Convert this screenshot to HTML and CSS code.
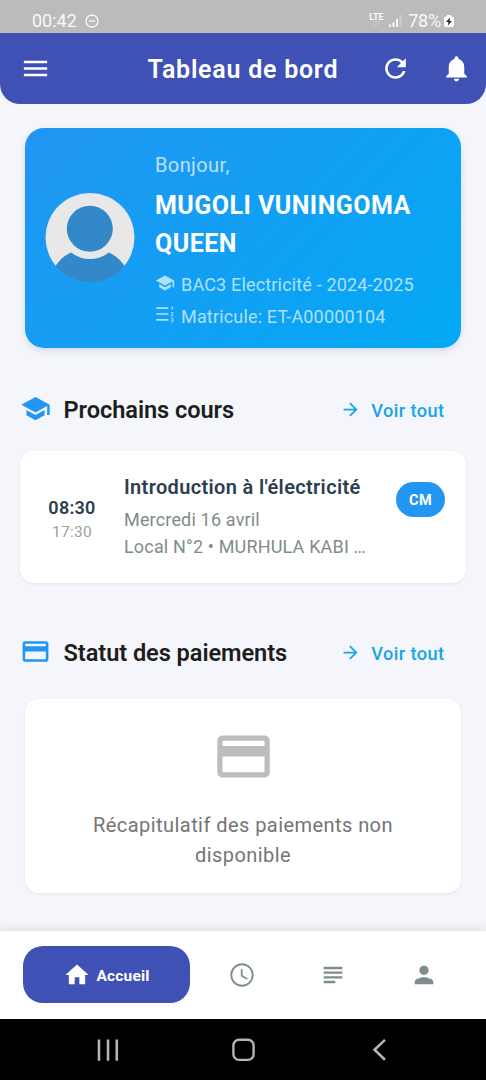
FILE: index.html
```html
<!DOCTYPE html>
<html lang="fr">
<head>
<meta charset="utf-8">
<title>Tableau de bord</title>
<link rel="stylesheet" href="styles.css">
</head>
<body>
<div class="phone">
  <div class="status">
    <span class="clock">00:42</span>
    <svg class="dnd" width="14" height="14" viewBox="0 0 14 14" fill="none" stroke="currentColor" stroke-width="1.3"><circle cx="7" cy="7" r="6"/><path d="M3.8 7h6.4"/></svg>
    <span class="lte"><b>LTE</b><i>LT</i></span>
    <svg class="signal" width="13" height="12" viewBox="0 0 13 12" fill="currentColor"><path d="M0 9.500h2V12H0zM3.500 7.500h2V12h-2zM7 4h2v8H7z"/><path opacity=".35" d="M10.500 0h2v12h-2z"/></svg>
    <span class="percent">78%</span>
    <svg class="battery" width="10" height="12" viewBox="0 0 10 12"><path fill="#fff" d="M3 0h4v1.500h1Q10 1.500 10 3.500V10Q10 12 8 12H2Q0 12 0 10V3.500Q0 1.500 2 1.500h1z"/><path fill="#222" d="M6.200 2.500 2 7h2.500L3.800 10.500 8 6H5.500z"/></svg>
  </div>

  <header class="appbar">
    <svg class="icon" viewBox="0 0 24 24"><path d="M3 18h18v-2H3v2zm0-5h18v-2H3v2zm0-7v2h18V6H3z"/></svg>
    <h1>Tableau de bord</h1>
    <svg class="icon refresh" viewBox="0 0 24 24"><path d="M17.650 6.350C16.200 4.900 14.210 4 12 4c-4.420 0-7.990 3.580-7.990 8s3.570 8 7.990 8c3.730 0 6.840-2.550 7.730-6h-2.080c-.82 2.330-3.040 4-5.650 4-3.310 0-6-2.690-6-6s2.690-6 6-6c1.660 0 3.140.69 4.220 1.780L13 11h7V4l-2.350 2.350z"/></svg>
    <svg class="icon" viewBox="0 0 24 24"><path d="M12 22c1.100 0 2-.9 2-2h-4c0 1.100.89 2 2 2zm6-6v-5c0-3.070-1.640-5.640-4.500-6.320V4c0-.83-.67-1.500-1.500-1.500s-1.500.67-1.500 1.500v.68C7.630 5.360 6 7.920 6 11v5l-2 2v1h16v-1l-2-2z"/></svg>
  </header>

  <main>
    <section class="profile">
      <svg class="avatar" width="90" height="90" viewBox="0 0 90 90">
        <circle cx="45" cy="44.500" r="44.500" fill="#e8e8e8"/>
        <circle cx="44.800" cy="35.700" r="23" fill="#3288c8"/>
        <path fill="#3288c8" d="M10.500 73Q17 63 26.500 59.500Q34 66 44.800 66Q56 66 63.500 59.500Q73 63 79.500 73A44.500 44.500 0 0 1 10.500 73z"/>
      </svg>
      <div class="who">
        <p class="hello">Bonjour,</p>
        <p class="name">MUGOLI VUNINGOMA QUEEN</p>
        <p class="detail"><svg viewBox="0 0 24 24"><path d="M5 13.180v4L12 21l7-3.820v-4L12 17l-7-3.820zM12 3 1 9l11 6 9-4.910V17h2V9L12 3z"/></svg><span>BAC3 Electricité - 2024-2025</span></p>
        <p class="detail"><svg viewBox="0 0 24 24"><path d="M1.500 4H16v2H1.500zm0 7H16v2H1.500zm0 7H16v2H1.500zM20 3h1.500v4H20zM19 10h3v1.500l-2 2.500h2v1h-3v-1.500l2-2.500h-2zM19 17h3v5h-3v-1h2v-1h-1v-1h1v-1h-2z"/></svg><span>Matricule: ET-A00000104</span></p>
      </div>
    </section>

    <div class="heading">
      <svg class="icon" viewBox="0 0 24 24"><path d="M5 13.180v4L12 21l7-3.820v-4L12 17l-7-3.820zM12 3 1 9l11 6 9-4.910V17h2V9L12 3z"/></svg>
      <h2>Prochains cours</h2>
      <a class="more"><svg viewBox="0 0 24 24"><path d="m12 4-1.410 1.410L16.170 11H4v2h12.170l-5.580 5.590L12 20l8-8z"/></svg>Voir tout</a>
    </div>
    <section class="course">
      <div class="times"><b>08:30</b><span>17:30</span></div>
      <div class="info">
        <h3>Introduction à l'électricité</h3>
        <p class="date">Mercredi 16 avril</p>
        <p>Local N°2 • MURHULA KABI …</p>
      </div>
      <span class="badge">CM</span>
    </section>

    <div class="heading second">
      <svg class="icon" viewBox="0 0 24 24"><path d="M20 4H4c-1.110 0-1.990.89-1.990 2L2 18c0 1.110.89 2 2 2h16c1.110 0 2-.89 2-2V6c0-1.110-.89-2-2-2zm0 14H4v-6h16v6zm0-10H4V6h16v2z"/></svg>
      <h2>Statut des paiements</h2>
      <a class="more"><svg viewBox="0 0 24 24"><path d="m12 4-1.410 1.410L16.170 11H4v2h12.170l-5.580 5.590L12 20l8-8z"/></svg>Voir tout</a>
    </div>
    <section class="payment">
      <svg viewBox="0 0 24 24"><path d="M20 4H4c-1.110 0-1.990.89-1.990 2L2 18c0 1.110.89 2 2 2h16c1.110 0 2-.89 2-2V6c0-1.110-.89-2-2-2zm0 14H4v-6h16v6zm0-10H4V6h16v2z"/></svg>
      <p>Récapitulatif des paiements non<br>disponible</p>
    </section>
  </main>

  <nav class="tabs">
    <a class="tab active"><svg viewBox="0 0 24 24"><path d="M10 20v-6h4v6h5v-8h3L12 3 2 12h3v8z"/></svg><span>Accueil</span></a>
    <a class="tab"><svg viewBox="0 0 24 24"><path d="M11.990 2C6.470 2 2 6.480 2 12s4.470 10 9.990 10C17.520 22 22 17.520 22 12S17.520 2 11.990 2zM12 20.400a8.400 8.400 0 1 1 0-16.800 8.400 8.400 0 0 1 0 16.800zM12.500 7H11v6l5.250 3.150.75-1.230-4.500-2.670z"/></svg></a>
    <a class="tab"><svg viewBox="0 0 24 24"><path d="M14 17H4v2h10v-2zm6-8H4v2h16V9zM4 15h16v-2H4v2zM4 5v2h16V5H4z"/></svg></a>
    <a class="tab"><svg viewBox="0 0 24 24"><path d="M12 12c2.210 0 4-1.790 4-4s-1.790-4-4-4-4 1.790-4 4 1.790 4 4 4zm0 2c-2.670 0-8 1.340-8 4v2h16v-2c0-2.660-5.330-4-8-4z"/></svg></a>
  </nav>

  <div class="system">
    <svg viewBox="0 0 24 24" stroke-width="2.500"><path d="M3.800 2.300v20.400M12.500 2.300v20.400M20.900 2.300v20.400"/></svg>
    <svg viewBox="0 0 24 24" stroke-width="2.300"><rect x="2.300" y="2.600" width="19.400" height="19.400" rx="5.500"/></svg>
    <svg viewBox="0 0 24 24" stroke-width="2.500"><path d="M18.200 2.800 8.200 12.300l10 9.500"/></svg>
  </div>
</div>
</body>
</html>
```
FILE: styles.css
```css
* { box-sizing: border-box; margin: 0; padding: 0; }
body { font-family: Roboto, "Liberation Sans", sans-serif; background: #f5f6fb; }
svg { display: block; flex: none; }
h1, h2, h3, p, span, a { white-space: nowrap; }

.phone { width: 486px; height: 1080px; display: flex; flex-direction: column; overflow: hidden; background: #f5f6fb; }

.status { height: 33px; flex: none; background: #bbb; color: #f8f8f8; display: flex; align-items: center; padding: 8px 32px 0 32px; }
.clock { font-size: 18px; line-height: 24px; letter-spacing: 0; }
.dnd { margin-left: 8px; }
.lte { margin-left: auto; display: flex; flex-direction: column; align-items: center; font-size: 9px; line-height: 8px; margin-top: -1px; }
.lte i { font-style: normal; font-size: 7px; line-height: 6px; opacity: .35; }
.signal { margin: 1px 6.500px 0 5px; }
.percent { font-size: 18px; line-height: 24px; letter-spacing: -.2px; }
.battery { margin: 0 0 0 3px; }

.icon { width: 31px; height: 31px; fill: currentColor; }
.appbar { height: 70.500px; flex: none; background: #3f51b5; color: #fff; border-radius: 0 0 20px 20px; display: flex; align-items: center; padding: 0 14.500px 0 20px; }
.appbar h1 { font-size: 25px; font-weight: 600; letter-spacing: .75px; margin: 2px auto 0 96.500px; }
.refresh { margin-right: 30px; }

main { flex: 1; display: flex; flex-direction: column; padding-top: 24px; }

.profile { height: 220.500px; margin: 0 25px; border-radius: 19px; background: linear-gradient(135deg, #2196f3, #03a9f4); box-shadow: 0 3px 7px rgba(30, 60, 100, .14); display: flex; align-items: flex-start; padding: 20px 20px 0; color: #fff; }
.avatar { margin-top: 45px; }
.who { margin-left: 20px; width: 270px; }
.hello { font-size: 20px; line-height: 34px; letter-spacing: .4px; opacity: .7; }
.name { font-size: 25px; font-weight: 700; line-height: 38px; white-space: normal; letter-spacing: .47px; margin-top: 5.500px; }
.detail { display: flex; align-items: center; font-size: 18px; line-height: 32px; color: #b0e0fc; letter-spacing: .17px; }
.name + .detail { margin-top: 6px; }
.detail svg { width: 20px; height: 20px; fill: currentColor; margin: -4px 6px 0 0; }
.detail + .detail svg { margin-top: -6px; }

.heading { margin: 39px 41.500px 0 20px; height: 44px; display: flex; align-items: center; color: #2196f3; }
.heading .icon { margin-top: -1px; }
.heading h2 { font-size: 23.600px; font-weight: 600; color: #1d1d20; margin: 2px 0 0 12.500px; letter-spacing: -.07px; }
.more { margin-left: auto; display: flex; align-items: center; font-size: 18.200px; font-weight: 500; color: #16a4ea; letter-spacing: .42px; margin-top: 2px; }
.more svg { width: 21px; height: 21px; fill: currentColor; margin: -2px 10px 0 0; }

.course { height: 132px; margin: 20px 20px 0; background: #fff; border-radius: 14px; box-shadow: 0 1px 3px rgba(30, 40, 80, .08); display: flex; align-items: flex-start; padding: 0 21px 0 28px; }
.times { width: 48px; display: flex; flex-direction: column; align-items: center; margin-top: 45px; }
.times b { font-size: 18px; line-height: 24px; font-weight: 600; color: #2c3e50; letter-spacing: .25px; }
.times span { font-size: 15.500px; line-height: 24px; color: #9c9fa1; letter-spacing: .25px; }
.info { margin: 21.500px 0 0 28px; }
.info h3 { font-size: 20px; line-height: 28px; font-weight: 600; color: #2c3e50; letter-spacing: .34px; }
.info p { font-size: 18px; line-height: 27px; color: #7f8c8d; letter-spacing: .17px; }
.info .date { margin-top: 5.500px; }
.badge { margin: 31px 0 0 auto; width: 49px; height: 35px; border-radius: 18px; background: #2196f3; color: #fff; font-size: 14.500px; font-weight: 700; line-height: 37px; text-align: center; letter-spacing: .3px; }

.second { margin-top: 47px; }
.payment { height: 194px; margin: 25px 25px 0; background: #fff; border-radius: 14px; box-shadow: 0 1px 3px rgba(30, 40, 80, .08); display: flex; flex-direction: column; align-items: center; padding-top: 26px; }
.payment svg { width: 63px; height: 63px; fill: #bdbdbd; }
.payment p { margin-top: 22px; font-size: 20px; line-height: 30px; color: #757575; text-align: center; letter-spacing: .44px; }

.tabs { height: 88.500px; flex: none; background: #fff; box-shadow: 0 -1px 10px rgba(0, 0, 0, .12); display: flex; align-items: center; padding: 0 17px 0 23px; color: #7f8c8d; }
.tab { flex: 1; display: flex; justify-content: center; }
.tab svg { width: 28px; height: 28px; fill: currentColor; }
.active { flex: none; width: 167px; height: 57px; margin-right: 6px; border-radius: 20px; background: #3f51b5; color: #fff; align-items: center; font-size: 15.500px; font-weight: 700; letter-spacing: .2px; }
.active svg { margin-right: 5px; }
.active span { margin-top: 2px; }

.system { height: 61px; flex: none; background: #000; display: flex; align-items: center; justify-content: space-between; padding: 0 95px; }
.system svg { width: 25px; height: 25px; fill: none; stroke: #b4b4b4; }
```
